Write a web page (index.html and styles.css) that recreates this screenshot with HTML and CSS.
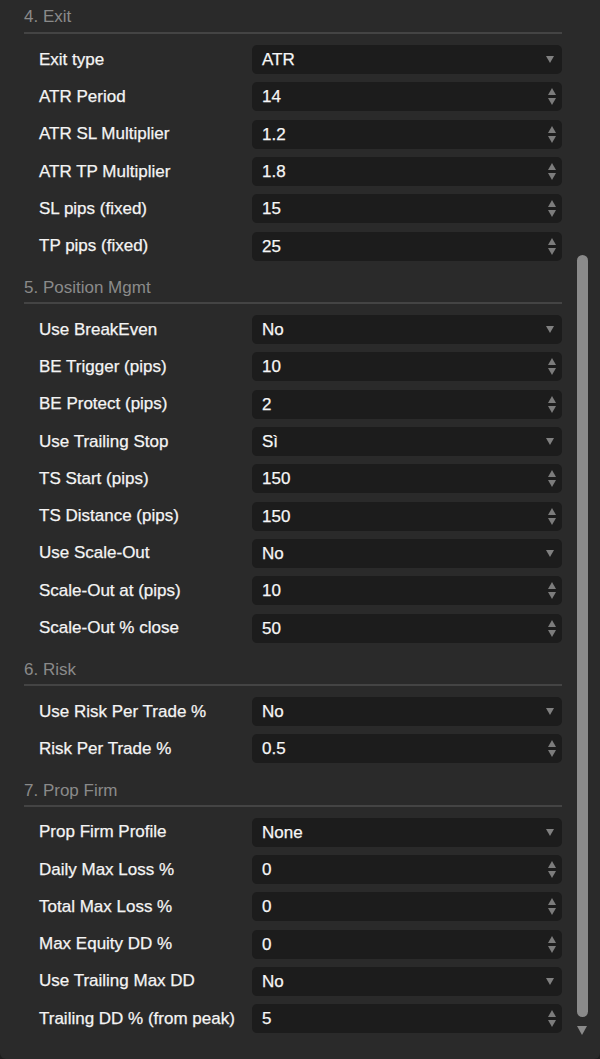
FILE: index.html
```html
<!DOCTYPE html>
<html>
<head>
<meta charset="utf-8">
<link rel="stylesheet" href="styles.css">
</head>
<body>
<div class="panel">
  <div class="content">
    <section class="section">
      <h2 class="sec-title">4. Exit</h2>
      <div class="row"><span class="label">Exit type</span><div class="field select">ATR</div></div>
      <div class="row"><span class="label">ATR Period</span><div class="field number">14</div></div>
      <div class="row"><span class="label">ATR SL Multiplier</span><div class="field number">1.2</div></div>
      <div class="row"><span class="label">ATR TP Multiplier</span><div class="field number">1.8</div></div>
      <div class="row"><span class="label">SL pips (fixed)</span><div class="field number">15</div></div>
      <div class="row"><span class="label">TP pips (fixed)</span><div class="field number">25</div></div>
    </section>
    <section class="section">
      <h2 class="sec-title">5. Position Mgmt</h2>
      <div class="row"><span class="label">Use BreakEven</span><div class="field select">No</div></div>
      <div class="row"><span class="label">BE Trigger (pips)</span><div class="field number">10</div></div>
      <div class="row"><span class="label">BE Protect (pips)</span><div class="field number">2</div></div>
      <div class="row"><span class="label">Use Trailing Stop</span><div class="field select">Sì</div></div>
      <div class="row"><span class="label">TS Start (pips)</span><div class="field number">150</div></div>
      <div class="row"><span class="label">TS Distance (pips)</span><div class="field number">150</div></div>
      <div class="row"><span class="label">Use Scale-Out</span><div class="field select">No</div></div>
      <div class="row"><span class="label">Scale-Out at (pips)</span><div class="field number">10</div></div>
      <div class="row"><span class="label">Scale-Out % close</span><div class="field number">50</div></div>
    </section>
    <section class="section">
      <h2 class="sec-title">6. Risk</h2>
      <div class="row"><span class="label">Use Risk Per Trade %</span><div class="field select">No</div></div>
      <div class="row"><span class="label">Risk Per Trade %</span><div class="field number">0.5</div></div>
    </section>
    <section class="section">
      <h2 class="sec-title">7. Prop Firm</h2>
      <div class="row"><span class="label">Prop Firm Profile</span><div class="field select">None</div></div>
      <div class="row"><span class="label">Daily Max Loss %</span><div class="field number">0</div></div>
      <div class="row"><span class="label">Total Max Loss %</span><div class="field number">0</div></div>
      <div class="row"><span class="label">Max Equity DD %</span><div class="field number">0</div></div>
      <div class="row"><span class="label">Use Trailing Max DD</span><div class="field select">No</div></div>
      <div class="row"><span class="label">Trailing DD % (from peak)</span><div class="field number">5</div></div>
    </section>
  </div>
  <div class="scrollbar">
    <div class="track"><div class="thumb"></div></div>
    <div class="arrow-down"></div>
  </div>
</div>
</body>
</html>
```
FILE: styles.css
```css
html, body {
  margin: 0;
  padding: 0;
  background: #1e1e1e;
}
body {
  font-family: "Liberation Sans", Arial, sans-serif;
  font-size: 17px;
  color: #f2f2f2;
}
.panel {
  width: 600px;
  height: 1059px;
  background: #2a2a2a;
  border-radius: 0 0 6px 6px;
  overflow: hidden;
  display: flex;
  flex-direction: row;
}
.content {
  width: 538px;
  padding-left: 24px;
  flex: none;
}
.sec-title {
  margin: 0;
  padding: 9px 0 4px 0;
  font-size: 17px;
  font-weight: normal;
  line-height: 20px;
  color: #8a8a8a;
  border-bottom: 2px solid #444444;
  margin-bottom: 11.2px;
}
.section:first-child .sec-title {
  padding-top: 7px;
  padding-bottom: 5px;
}
.row {
  display: flex;
  align-items: center;
  height: 29px;
  margin-bottom: 8.3px;
}
.label {
  width: 228px;
  flex: none;
  padding-left: 15px;
  box-sizing: border-box;
  line-height: 20px;
  color: #f4f4f4;
  -webkit-text-stroke: 0.25px #f4f4f4;
}
.field {
  position: relative;
  width: 310px;
  flex: none;
  height: 29px;
  box-sizing: border-box;
  background: #1c1c1c;
  border-radius: 5px;
  padding-left: 10px;
  line-height: 29px;
  color: #f6f6f6;
  -webkit-text-stroke: 0.25px #f6f6f6;
}
.select::after {
  content: "";
  position: absolute;
  right: 8px;
  top: 11px;
  border-left: 4px solid transparent;
  border-right: 4px solid transparent;
  border-top: 7px solid #808080;
}
.number::before {
  content: "";
  position: absolute;
  right: 6px;
  top: 6px;
  border-left: 4.5px solid transparent;
  border-right: 4.5px solid transparent;
  border-bottom: 7px solid #7c7c7c;
}
.number::after {
  content: "";
  position: absolute;
  right: 6px;
  top: 16px;
  border-left: 4.5px solid transparent;
  border-right: 4.5px solid transparent;
  border-top: 7px solid #7c7c7c;
}
.scrollbar {
  width: 38px;
  flex: none;
  display: flex;
  flex-direction: column;
  align-items: flex-start;
  padding-left: 15px;
  box-sizing: border-box;
}
.track {
  height: 1022px;
  display: flex;
  flex-direction: column;
  justify-content: flex-end;
}
.thumb {
  width: 11px;
  height: 762px;
  margin-bottom: 5px;
  background: #8a8a8a;
  border-radius: 6px;
}
.arrow-down {
  margin-top: 4px;
  margin-left: 0px;
  border-left: 5.5px solid transparent;
  border-right: 5.5px solid transparent;
  border-top: 9px solid #8a8a8a;
  width: 0;
  height: 0;
}
```
